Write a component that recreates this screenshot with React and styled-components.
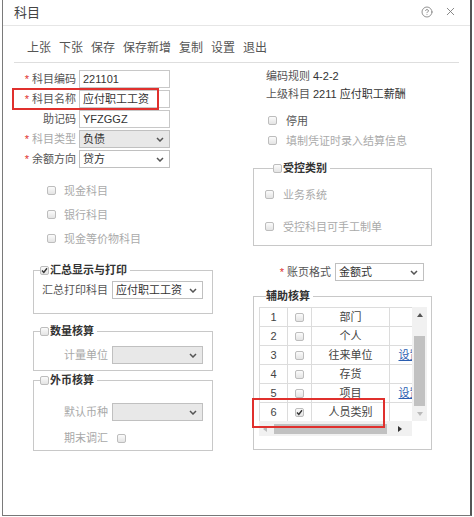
import React from "react";
import styled, { createGlobalStyle } from "styled-components";
import { CircleHelp, X } from "lucide-react";

const GlobalStyle = createGlobalStyle`
  html, body { margin: 0; padding: 0; background: #fff; }
  body {
    font-family: "Liberation Sans", "Noto Sans CJK SC", sans-serif;
    font-size: 11px;
    color: #555;
  }
  * { box-sizing: border-box; }
`;

const Dialog = styled.div`
  margin-left: 2px;
  width: 470px;
  height: 516px;
  background: #fff;
  border-left: 1px solid #7a7a7a;
  border-right: 2px solid #555;
  border-bottom: 1px solid #777;
  display: flex;
  flex-direction: column;
`;

const Header = styled.div`
  height: 26px;
  display: flex;
  align-items: center;
  padding: 0 13px 2px 11px;
  border-bottom: 1px solid #e6e6e6;
`;

const Title = styled.div`
  flex: 1;
  font-size: 13px;
  color: #444;
`;

const HeaderIcons = styled.div`
  display: flex;
  align-items: center;
  gap: 11px;
  color: #777;
`;

const Toolbar = styled.div`
  margin: 0 11px;
  padding: 14px 0 6px 13px;
  display: flex;
  gap: 8px;
  font-size: 12px;
  line-height: 16px;
  color: #555;
  border-bottom: 1px solid #dedede;
`;

const Body = styled.div`
  display: grid;
  grid-template-columns: 216px 179px;
  column-gap: 25px;
  padding-left: 9px;
  align-items: start;
`;

const Column = styled.div`
  display: flex;
  flex-direction: column;
  padding-top: ${(p) => p.$pt}px;
`;

const FormRows = styled.div`
  display: flex;
  flex-direction: column;
  gap: 2px;
`;

const FormRow = styled.div`
  position: relative;
  display: grid;
  grid-template-columns: ${(p) => p.$label}px ${(p) => p.$field}px;
  column-gap: ${(p) => p.$gap || 3}px;
  align-items: center;
  height: ${(p) => p.$h || 18}px;
  margin-top: ${(p) => p.$mt || 0}px;
`;

const Label = styled.div`
  text-align: right;
  white-space: nowrap;
  line-height: 18px;
  color: ${(p) => (p.$muted ? "#a8a8a8" : "#555")};
`;

const Star = styled.span`
  color: #e0302d;
  margin-right: 3px;
`;

const Input = styled.div`
  height: 18px;
  border: 1px solid #c8c8c8;
  padding: 0 3px;
  line-height: 16px;
  color: #333;
  white-space: nowrap;
  overflow: hidden;
`;

const Select = styled.div`
  height: 18px;
  border: 1px solid #c0c0c0;
  background: ${(p) => (p.$disabled ? "#e8e8e8" : "#fff")};
  padding: 0 5px 0 3px;
  display: flex;
  align-items: center;
  justify-content: space-between;
  line-height: 16px;
  color: #333;
  white-space: nowrap;
`;

const Highlight = styled.div`
  position: absolute;
  left: ${(p) => p.$x}px;
  top: ${(p) => p.$y}px;
  width: ${(p) => p.$w}px;
  height: ${(p) => p.$h}px;
  border: 2px solid #e0302d;
  pointer-events: none;
`;

const CheckList = styled.div`
  display: flex;
  flex-direction: column;
  gap: ${(p) => p.$gap || 0}px;
  margin-top: ${(p) => p.$mt || 0}px;
  padding-left: ${(p) => p.$pl}px;
`;

const CheckRow = styled.div`
  display: flex;
  align-items: center;
  gap: ${(p) => p.$gap || 9}px;
  height: ${(p) => p.$h || 16}px;
  color: ${(p) => (p.$muted ? "#aaa" : "#555")};
  white-space: nowrap;
`;

const Box = styled.span`
  width: 9px;
  height: 9px;
  flex: none;
  border: 1px solid #bdbdbd;
  border-radius: 2px;
  background: linear-gradient(#fbfbfb, #e4e4e4);
  display: inline-flex;
  align-items: center;
  justify-content: center;
`;

const Check = ({ checked }) => (
  <Box>
    {checked && (
      <svg width="7" height="7" viewBox="0 0 7 7">
        <path d="M1 3.6 L2.8 5.4 L6 1.3" fill="none" stroke="#333" strokeWidth="1.4" />
      </svg>
    )}
  </Box>
);

const Chevron = () => (
  <svg width="8" height="5" viewBox="0 0 8 5">
    <polyline points="1,1 4,4 7,1" fill="none" stroke="#555" strokeWidth="1.5" />
  </svg>
);

const Group = styled.fieldset`
  margin: ${(p) => p.$mt}px 0 0 ${(p) => p.$ml || 0}px;
  width: ${(p) => p.$w}px;
  padding: ${(p) => p.$pad};
  border: 1px solid #c8c8c8;
  min-width: 0;
`;

const Legend = styled.legend`
  display: flex;
  align-items: center;
  gap: 1px;
  margin-left: ${(p) => p.$ml}px;
  padding: 0 3px 0 0;
  font-size: 11px;
  font-weight: bold;
  line-height: 14px;
  color: #333;
`;

const InfoRow = styled.div`
  display: flex;
  gap: 3px;
  height: 14px;
  line-height: 14px;
  padding-left: 13px;
  margin-top: ${(p) => p.$mt || 0}px;
  color: #555;
  white-space: nowrap;
`;

const Value = styled.span`
  color: #333;
`;

const TableArea = styled.div`
  position: relative;
  display: grid;
  grid-template-columns: 153px 15px;
  grid-template-rows: 114px 15px;
`;

const Viewport = styled.div`
  overflow: hidden;
`;

const Grid = styled.table`
  border-collapse: collapse;
  width: 170px;
  table-layout: fixed;
  td {
    border: 1px solid #dcdcdc;
    height: 19px;
    padding: 0;
    text-align: center;
    color: #444;
    white-space: nowrap;
    line-height: 17px;
  }
`;

const CellBox = styled.div`
  display: flex;
  justify-content: center;
  align-items: center;
`;

const LinkText = styled.span`
  color: #2a5db0;
  text-decoration: underline;
`;

const VScroll = styled.div`
  background: #f1f1f1;
  display: flex;
  flex-direction: column;
  align-items: center;
`;

const HScroll = styled.div`
  background: #f1f1f1;
  display: flex;
  align-items: center;
`;

const ArrowCell = styled.div`
  width: ${(p) => p.$w}px;
  height: ${(p) => p.$h}px;
  flex: none;
  display: flex;
  align-items: center;
  justify-content: center;
`;

const Arrow = styled.span`
  width: 0;
  height: 0;
  border: 3px solid transparent;
  ${(p) =>
    p.$dir === "up"
      ? `border-bottom: 4px solid ${p.$color}; border-top-width: 0;`
      : p.$dir === "down"
      ? `border-top: 4px solid ${p.$color}; border-bottom-width: 0;`
      : p.$dir === "left"
      ? `border-right: 4px solid ${p.$color}; border-left-width: 0;`
      : `border-left: 4px solid ${p.$color}; border-right-width: 0;`}
`;

const Thumb = styled.div`
  background: #c1c1c1;
  flex: none;
  width: ${(p) => p.$w}px;
  height: ${(p) => p.$h}px;
  margin: ${(p) => p.$m};
`;

const rows = [
  { n: 1, name: "部门" },
  { n: 2, name: "个人" },
  { n: 3, name: "往来单位", link: true },
  { n: 4, name: "存货" },
  { n: 5, name: "项目", link: true },
  { n: 6, name: "人员类别", checked: true },
];

const tools = ["上张", "下张", "保存", "保存新增", "复制", "设置", "退出"];

export default function App() {
  return (
    <>
      <GlobalStyle />
      <Dialog>
        <Header>
          <Title>科目</Title>
          <HeaderIcons>
            <CircleHelp size={12} strokeWidth={1.6} />
            <X size={13} strokeWidth={1.6} />
          </HeaderIcons>
        </Header>
        <Toolbar>
          {tools.map((t) => (
            <span key={t}>{t}</span>
          ))}
        </Toolbar>

        <Body>
          <Column $pt={7}>
            <FormRows>
              <FormRow $label={64} $field={91}>
                <Label><Star>*</Star>科目编码</Label>
                <Input>221101</Input>
              </FormRow>
              <FormRow $label={64} $field={91}>
                <Label><Star>*</Star>科目名称</Label>
                <Input>应付职工工资</Input>
                <Highlight $x={0} $y={-2} $w={147} $h={22} />
              </FormRow>
              <FormRow $label={64} $field={91}>
                <Label>助记码</Label>
                <Input>YFZGGZ</Input>
              </FormRow>
              <FormRow $label={64} $field={91}>
                <Label $muted><Star>*</Star>科目类型</Label>
                <Select $disabled>负债<Chevron /></Select>
              </FormRow>
              <FormRow $label={64} $field={91}>
                <Label><Star>*</Star>余额方向</Label>
                <Select>贷方<Chevron /></Select>
              </FormRow>
            </FormRows>

            <CheckList $mt={10} $pl={35}>
              <CheckRow $h={24} $gap={8} $muted><Check />现金科目</CheckRow>
              <CheckRow $h={24} $gap={8} $muted><Check />银行科目</CheckRow>
              <CheckRow $h={24} $gap={8} $muted><Check />现金等价物科目</CheckRow>
            </CheckList>

            <Group $mt={13} $ml={21} $w={180} $pad="4px 0 14px 0">
              <Legend $ml={6}><Check checked />汇总显示与打印</Legend>
              <FormRow $label={74} $field={91} $gap={4}>
                <Label>汇总打印科目</Label>
                <Select>应付职工工资<Chevron /></Select>
              </FormRow>
            </Group>

            <Group $mt={10} $ml={21} $w={180} $pad="8px 0 6px 0">
              <Legend $ml={6}><Check />数量核算</Legend>
              <FormRow $label={74} $field={91} $gap={4}>
                <Label $muted>计量单位</Label>
                <Select $disabled><span /><Chevron /></Select>
              </FormRow>
            </Group>

            <Group $mt={2} $ml={21} $w={180} $pad="16px 0 5px 0">
              <Legend $ml={6}><Check />外币核算</Legend>
              <FormRow $label={74} $field={91} $gap={4}>
                <Label $muted>默认币种</Label>
                <Select $disabled><span /><Chevron /></Select>
              </FormRow>
              <FormRow $label={74} $field={9} $gap={9} $h={16} $mt={8}>
                <Label $muted>期末调汇</Label>
                <Check />
              </FormRow>
            </Group>
          </Column>

          <Column $pt={6}>
            <InfoRow>编码规则<Value>4-2-2</Value></InfoRow>
            <InfoRow $mt={4}>上级科目<Value>2211 应付职工薪酬</Value></InfoRow>

            <CheckList $mt={11} $gap={4} $pl={15}>
              <CheckRow><Check />停用</CheckRow>
              <CheckRow $muted><Check />填制凭证时录入结算信息</CheckRow>
            </CheckList>

            <Group $mt={13} $w={179} $pad="11px 0 11px 11px">
              <Legend $ml={8}><Check />受控类别</Legend>
              <CheckList $gap={16} $pl={0}>
                <CheckRow $muted><Check />业务系统</CheckRow>
                <CheckRow $muted><Check />受控科目可手工制单</CheckRow>
              </CheckList>
            </Group>

            <FormRow $label={78} $field={89} $gap={4} $mt={17}>
              <Label><Star>*</Star>账页格式</Label>
              <Select>金额式<Chevron /></Select>
            </FormRow>

            <Group $mt={8} $w={179} $pad="4px 0 13px 5px">
              <Legend $ml={7}>辅助核算</Legend>
              <TableArea>
                <Viewport>
                  <Grid>
                    <colgroup>
                      <col style={{ width: 28 }} />
                      <col style={{ width: 24 }} />
                      <col style={{ width: 78 }} />
                      <col style={{ width: 40 }} />
                    </colgroup>
                    <tbody>
                      {rows.map((r) => (
                        <tr key={r.n}>
                          <td>{r.n}</td>
                          <td>
                            <CellBox><Check checked={r.checked} /></CellBox>
                          </td>
                          <td>{r.name}</td>
                          <td>{r.link && <LinkText>设置</LinkText>}</td>
                        </tr>
                      ))}
                    </tbody>
                  </Grid>
                </Viewport>
                <VScroll>
                  <ArrowCell $w={15} $h={16}><Arrow $dir="up" $color="#555" /></ArrowCell>
                  <Thumb $w={11} $h={70} $m="13px 0 0 0" />
                  <ArrowCell $w={15} $h={15}><Arrow $dir="down" $color="#bbb" /></ArrowCell>
                </VScroll>
                <HScroll>
                  <ArrowCell $w={12} $h={15}><Arrow $dir="left" $color="#bbb" /></ArrowCell>
                  <Thumb $w={113} $h={10} $m="0 0 0 3px" />
                  <ArrowCell $w={25} $h={15}><Arrow $dir="right" $color="#333" /></ArrowCell>
                </HScroll>
                <div />
                <Highlight $x={-7} $y={91} $w={133} $h={30} />
              </TableArea>
            </Group>
          </Column>
        </Body>
      </Dialog>
    </>
  );
}
